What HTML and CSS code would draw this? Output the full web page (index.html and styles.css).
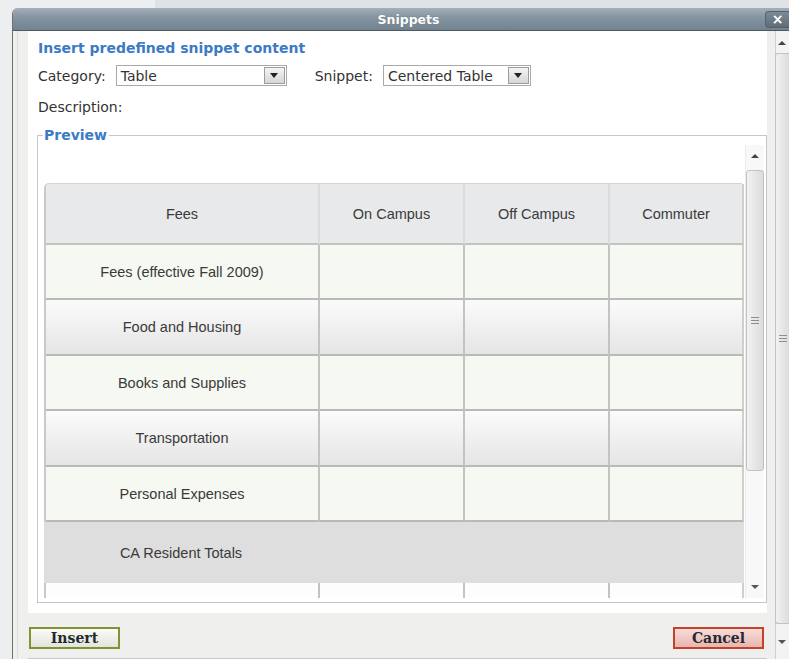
FILE: index.html
```html
<!DOCTYPE html>
<html lang="en">
<head>
<meta charset="utf-8">
<title>Snippets</title>
<link rel="stylesheet" href="styles.css">
</head>
<body>
<div class="desk">
  <div class="dialog">
    <div class="titlebar">
      <span class="title">Snippets</span>
      <span class="close">×</span>
    </div>
    <div class="frame">
      <div class="gutter"></div>
      <div class="pane">
        <div class="sheet">
          <h1 class="heading">Insert predefined snippet content</h1>
          <div class="pickers">
            <label class="field">Category:
              <span class="select sel-category"><span class="sel-text">Table</span><span class="sel-btn"><i class="tri-down"></i></span></span>
            </label>
            <label class="field">Snippet:
              <span class="select sel-snippet"><span class="sel-text">Centered Table</span><span class="sel-btn"><i class="tri-down"></i></span></span>
            </label>
          </div>
          <div class="desc">Description:</div>
          <fieldset class="preview">
            <legend>Preview</legend>
            <div class="scroller">
              <div class="canvas">
                <div class="grid">
                  <div class="cell head first">Fees</div>
                  <div class="cell head">On Campus</div>
                  <div class="cell head">Off Campus</div>
                  <div class="cell head last">Commuter</div>

                  <div class="cell pale first">Fees (effective Fall 2009)</div>
                  <div class="cell pale"></div>
                  <div class="cell pale"></div>
                  <div class="cell pale last"></div>

                  <div class="cell shade first">Food and Housing</div>
                  <div class="cell shade"></div>
                  <div class="cell shade"></div>
                  <div class="cell shade last"></div>

                  <div class="cell pale first">Books and Supplies</div>
                  <div class="cell pale"></div>
                  <div class="cell pale"></div>
                  <div class="cell pale last"></div>

                  <div class="cell shade first">Transportation</div>
                  <div class="cell shade"></div>
                  <div class="cell shade"></div>
                  <div class="cell shade last"></div>

                  <div class="cell pale first">Personal Expenses</div>
                  <div class="cell pale"></div>
                  <div class="cell pale"></div>
                  <div class="cell pale last"></div>

                  <div class="total"><span class="total-label">CA Resident Totals</span></div>

                  <div class="cell blank first"></div>
                  <div class="cell blank"></div>
                  <div class="cell blank"></div>
                  <div class="cell blank last"></div>
                </div>
              </div>
              <div class="vbar inner">
                <span class="arrow up"></span>
                <span class="thumb"><span class="grip"></span></span>
                <span class="arrow down"></span>
              </div>
            </div>
          </fieldset>
        </div>
        <div class="footer">
          <button class="btn btn-insert" type="button">Insert</button>
          <button class="btn btn-cancel" type="button">Cancel</button>
        </div>
      </div>
      <div class="vbar outer">
        <span class="arrow up"></span>
        <span class="thumb"><span class="grip"></span></span>
        <span class="arrow down"></span>
      </div>
    </div>
  </div>
</div>
</body>
</html>
```

FILE: styles.css
```css
* { box-sizing: border-box; }

html, body {
  margin: 0;
  padding: 0;
}

body {
  width: 789px;
  height: 659px;
  overflow: hidden;
  background: #e2e5e9;
  font-family: "DejaVu Sans", Verdana, sans-serif;
  color: #333;
}

.desk {
  padding: 8px 0 0 12px;
  height: 659px;
  background: linear-gradient(to right, #eceef0 0, #eceef0 155px, #dfe3e8 155px);
}

.dialog {
  width: 777px;
  height: 651px;
  display: flex;
  flex-direction: column;
  background: #efefed;
  border-left: 1px solid #6f6f6f;
  border-radius: 6px 0 0 0;
  overflow: hidden;
}

/* window title bar */
.titlebar {
  position: relative;
  height: 23px;
  flex: none;
  display: flex;
  align-items: center;
  justify-content: center;
  background: linear-gradient(#a3afb9 0, #8595a1 40%, #72828e 100%);
  border-bottom: 1px solid #4d5962;
}

.title {
  font-weight: bold;
  font-size: 12.5px;
  color: #fff;
  text-shadow: 0 0 1px #5d6a74;
  margin-left: 15px;
}

.close {
  position: absolute;
  right: 0;
  top: 3px;
  width: 24px;
  height: 17px;
  border-radius: 4px 0 0 4px;
  background: linear-gradient(#7c8a95, #5f6d78);
  border: 1px solid #56626b;
  border-right: none;
  color: #fff;
  font-weight: bold;
  font-size: 14px;
  line-height: 14px;
  text-align: center;
}

.frame {
  flex: 1;
  display: flex;
}

.gutter {
  width: 15px;
  flex: none;
  border-left: 4px solid #efefed;
  box-shadow: inset 1px 0 0 #dcdcda;
}

.pane {
  width: 739px;
  flex: none;
  display: flex;
  flex-direction: column;
}

.sheet {
  height: 582px;
  background: #fff;
  padding: 8px 0 0 9px;
}

.heading {
  margin: 0 0 8px 1px;
  font-size: 14px;
  line-height: 18px;
  font-weight: bold;
  color: #3b7bc4;
}

.pickers {
  display: flex;
  align-items: center;
  height: 21px;
  padding-left: 1px;
  gap: 28px;
}

.field {
  display: flex;
  align-items: center;
  gap: 10px;
  font-size: 14px;
  color: #333;
}

.select {
  display: flex;
  align-items: center;
  height: 21px;
  border: 1px solid #a9a9a9;
  background: #fff;
  padding: 0 1px 0 4px;
}

.sel-category { width: 171px; }
.sel-snippet { width: 148px; }

.sel-text {
  flex: 1;
  font-size: 14px;
  color: #333;
}

.sel-btn {
  width: 21px;
  height: 17px;
  border: 1px solid #9c9c9c;
  background: linear-gradient(#f4f4f4, #d6d6d6);
  display: flex;
  align-items: center;
  justify-content: center;
}

.tri-down {
  width: 0;
  height: 0;
  border-left: 4px solid transparent;
  border-right: 4px solid transparent;
  border-top: 5px solid #222;
}

.desc {
  margin-top: 12px;
  padding-left: 1px;
  font-size: 14px;
  line-height: 18px;
}

/* preview frame */
.preview {
  margin: 0;
  margin-top: 10px;
  width: 730px;
  height: 477px;
  border: 1px solid #c6c6c6;
  box-shadow: 1px 1px 0 #fff inset;
  padding: 1px 3px 3px 6px;
  min-width: 0;
}

.preview legend {
  padding: 0 2px 0 1px;
  margin-left: -1px;
  font-size: 14px;
  line-height: 18px;
  font-weight: bold;
  color: #3b7bc4;
}

.scroller {
  height: 453px;
  display: flex;
  background: #fff;
}

.canvas {
  width: 701px;
  flex: none;
  overflow: hidden;
  padding-top: 38px;
}

.grid {
  width: 698px;
  display: grid;
  grid-template-columns: 274px 145px 145px 134px;
  grid-template-rows: 61px 55px 56px 55px 56px 55px 61px 40px;
  border-left: 2px solid #c9c9c9;
  border-top: 1px solid #d4d4d4;
  border-radius: 5px 0 0 0;
  font-family: "Liberation Sans", Arial, sans-serif;
  font-size: 14.5px;
  color: #3a3a3a;
}

.cell {
  display: flex;
  align-items: center;
  justify-content: center;
  border-right: 2px solid #c3c3c3;
  border-bottom: 2px solid #b9b9b9;
}

.cell.last { border-right-color: #cfcfcf; }

.head {
  background: #e8e9eb;
  border-bottom-color: #c3c3c3;
  border-right-color: #dcdcdc;
}
.head.first { border-radius: 4px 0 0 0; }

.pale { background: #f6f8f2; }

.shade { background: linear-gradient(#fbfbfb, #e5e5e5); }

.total {
  grid-column: 1 / -1;
  margin-right: 0;
  margin-left: -2px;
  background: #dedede;
  display: flex;
  align-items: center;
}

.total-label {
  width: 276px;
  text-align: center;
  padding-right: 2px;
}

.blank { background: #fdfdfd; border-bottom: none; }

/* scroll bars */
.vbar {
  position: relative;
  flex: none;
  display: flex;
  flex-direction: column;
  align-items: center;
}

.vbar .arrow {
  width: 0;
  height: 0;
  border-left: 4px solid transparent;
  border-right: 4px solid transparent;
}

.vbar .arrow.up { border-bottom: 4px solid #444; }
.vbar .arrow.down { border-top: 4px solid #555; }

.vbar .thumb {
  display: flex;
  align-items: center;
  justify-content: center;
  border: 1px solid #c2c2c2;
  border-radius: 3px;
  background: linear-gradient(to right, #f2f2f2, #dcdcdc);
}

.grip {
  width: 8px;
  height: 7px;
  background: repeating-linear-gradient(#8d8d8d 0 1px, transparent 1px 3px);
}

.vbar.inner {
  width: 19px;
  background: #f8f8f8;
  border-left: 1px solid #ececec;
}
.vbar.inner .arrow.up { margin-top: 9px; }
.vbar.inner .thumb {
  margin-top: 12px;
  width: 18px;
  height: 301px;
}
.vbar.inner .arrow.down { margin-top: 114px; }

.vbar.outer {
  width: 22px;
  border-left: 8px solid #efefed;
  background: #f3f3f3;
  box-shadow: inset 1px 0 0 #cfcfcf;
}
.vbar.outer .arrow.up { margin-top: 10px; }
.vbar.outer .thumb {
  margin-top: 8px;
  width: 14px;
  height: 571px;
  border-radius: 3px 0 0 3px;
  border-right: none;
}
.vbar.outer .arrow.down { margin-top: 16px; }

/* footer buttons */
.footer {
  flex: 1;
  display: flex;
  justify-content: space-between;
  align-items: flex-start;
  padding: 14px 3px 0 1px;
  background: #efefed;
  border-bottom: 1px solid #c9c9c9;
}

.btn {
  width: 91px;
  height: 22px;
  padding: 0;
  font-family: "DejaVu Serif", Georgia, serif;
  font-weight: bold;
  font-size: 14px;
  line-height: 18px;
  color: #1f2a33;
  cursor: pointer;
}

.btn-insert {
  border: 2px solid #7f9234;
  background: linear-gradient(#fbfbf7, #e2e4da);
}

.btn-cancel {
  border: 2px solid #c4422a;
  background: linear-gradient(#f7dcd8, #e8b6ae);
}
```
